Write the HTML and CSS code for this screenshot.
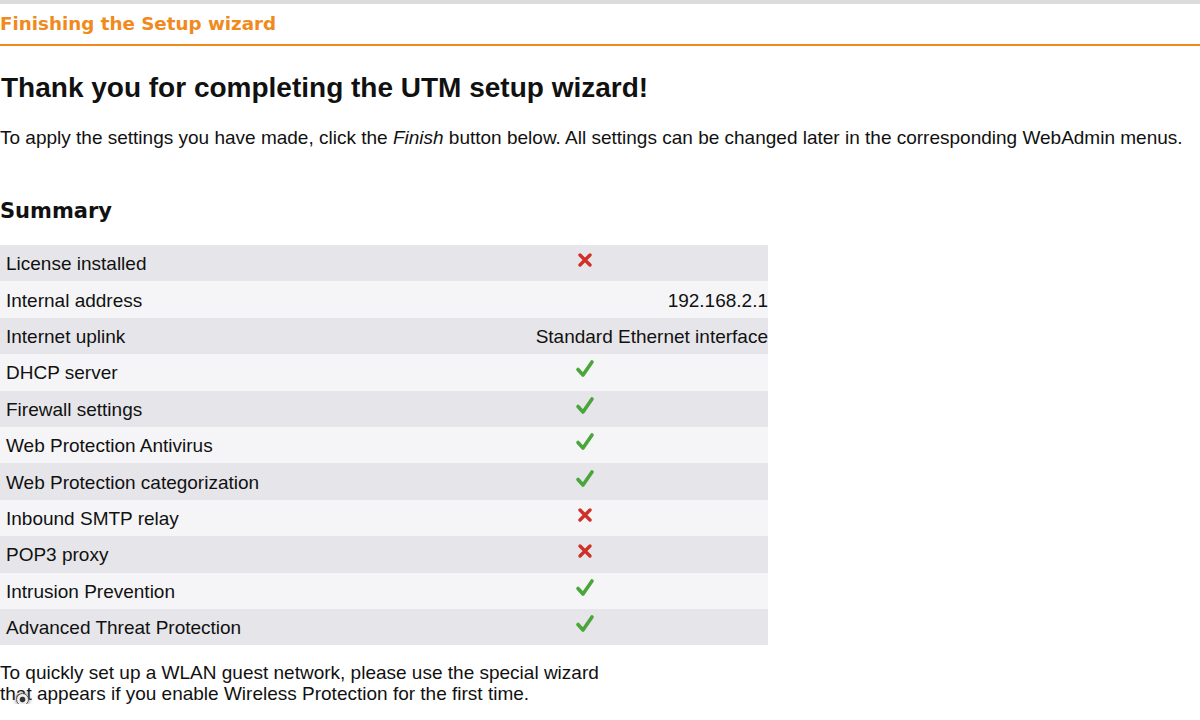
FILE: index.html
```html
<!DOCTYPE html>
<html>
    <head>
        <meta charset="UTF-8">
        <meta name="viewport" content="width=device-width, initial-scale=1.0">
        <link rel="stylesheet" href="styles.css">
    </head>
    <body>
        <div class="topbar"></div>
        <div class="header">
            <h2>Finishing the Setup wizard</h2>
        </div>

        <div class="content">
            <h1>Thank you for completing the UTM setup wizard!</h1>
            <p class="intro">To apply the settings you have made, click the <i>Finish</i> button below. All settings can be changed later in the corresponding WebAdmin menus.</p>

            <h3>Summary</h3>
            <table class="summary">
                <tr><td>License installed</td><td class="icon"><svg class="no" viewBox="0 0 16 16"><path d="M3 3 L13 13 M13 3 L3 13"/></svg></td></tr>
                <tr><td>Internal address</td><td class="val">192.168.2.1</td></tr>
                <tr><td>Internet uplink</td><td class="val">Standard Ethernet interface</td></tr>
                <tr><td>DHCP server</td><td class="icon"><svg class="ok" viewBox="0 0 20 20"><path d="M3 10.5 L8 16 L17 3"/></svg></td></tr>
                <tr><td>Firewall settings</td><td class="icon"><svg class="ok" viewBox="0 0 20 20"><path d="M3 10.5 L8 16 L17 3"/></svg></td></tr>
                <tr><td>Web Protection Antivirus</td><td class="icon"><svg class="ok" viewBox="0 0 20 20"><path d="M3 10.5 L8 16 L17 3"/></svg></td></tr>
                <tr><td>Web Protection categorization</td><td class="icon"><svg class="ok" viewBox="0 0 20 20"><path d="M3 10.5 L8 16 L17 3"/></svg></td></tr>
                <tr><td>Inbound SMTP relay</td><td class="icon"><svg class="no" viewBox="0 0 16 16"><path d="M3 3 L13 13 M13 3 L3 13"/></svg></td></tr>
                <tr><td>POP3 proxy</td><td class="icon"><svg class="no" viewBox="0 0 16 16"><path d="M3 3 L13 13 M13 3 L3 13"/></svg></td></tr>
                <tr><td>Intrusion Prevention</td><td class="icon"><svg class="ok" viewBox="0 0 20 20"><path d="M3 10.5 L8 16 L17 3"/></svg></td></tr>
                <tr><td>Advanced Threat Protection</td><td class="icon"><svg class="ok" viewBox="0 0 20 20"><path d="M3 10.5 L8 16 L17 3"/></svg></td></tr>
            </table>

            <p class="note">To quickly set up a WLAN guest network, please use the special wizard<br>that appears if you enable Wireless Protection for the first time.<span class="cursor"></span></p>
        </div>
    </body>
</html>
```

FILE: styles.css
```css
body{
    margin: 0;
    background-color: white;
    font-family: "Liberation Sans", Arial, sans-serif;
    color: #111111;
}
.topbar{
    height: 4px;
    background-color: #dcdcdc;
}
.header{
    height: 40px;
    border-bottom: 2px solid #f08a1c;
    display: flex;
    align-items: center;
}
.header h2{
    margin: 0;
    font-family: "DejaVu Sans", Verdana, sans-serif;
    font-size: 18.3px;
    color: #f08a1c;
    padding-bottom: 1px;
}
h1{
    margin: 26px 0 0 1px;
    font-size: 28px;
    font-weight: bold;
    line-height: 32px;
}
.intro{
    margin: 23px 0 0 0;
    font-size: 19px;
    line-height: 22px;
}
h3{
    margin: 49px 0 0 0;
    font-family: "DejaVu Sans", Verdana, sans-serif;
    font-size: 21px;
    line-height: 26px;
}
.summary{
    border-collapse: collapse;
    table-layout: fixed;
    width: 768px;
    margin-top: 21px;
    font-size: 19px;
    line-height: 22px;
}
.summary td{
    height: 36.4px;
    padding: 2px 0 0 6px;
    box-sizing: border-box;
}
.summary td:first-child{
    width: 402px;
}
.summary tr:nth-child(odd){
    background-color: #e6e6ea;
}
.summary tr:nth-child(even){
    background-color: #f5f5f7;
}
.summary .val{
    text-align: right;
    padding: 2px 0 0 0;
}
.summary .icon{
    text-align: center;
    padding: 0 0 6px 0;
}
.summary svg{
    display: block;
    margin: 0 auto;
    fill: none;
    stroke-linecap: round;
    stroke-linejoin: round;
}
.ok{
    width: 20px;
    height: 20px;
    stroke: #4aa53a;
    stroke-width: 3.6;
}
.no{
    width: 16px;
    height: 16px;
    stroke: #d0302a;
    stroke-width: 3.4;
}
.note{
    position: relative;
    margin: 17px 0 0 0;
    font-size: 19px;
    line-height: 21px;
}
.cursor{
    position: absolute;
    left: 16px;
    top: 31px;
    width: 11px;
    height: 11px;
    border-radius: 50%;
    border: 1px solid #555;
    background: radial-gradient(circle, #333 30%, #eee 42%);
    box-shadow: 0 0 4px #777;
}
```
